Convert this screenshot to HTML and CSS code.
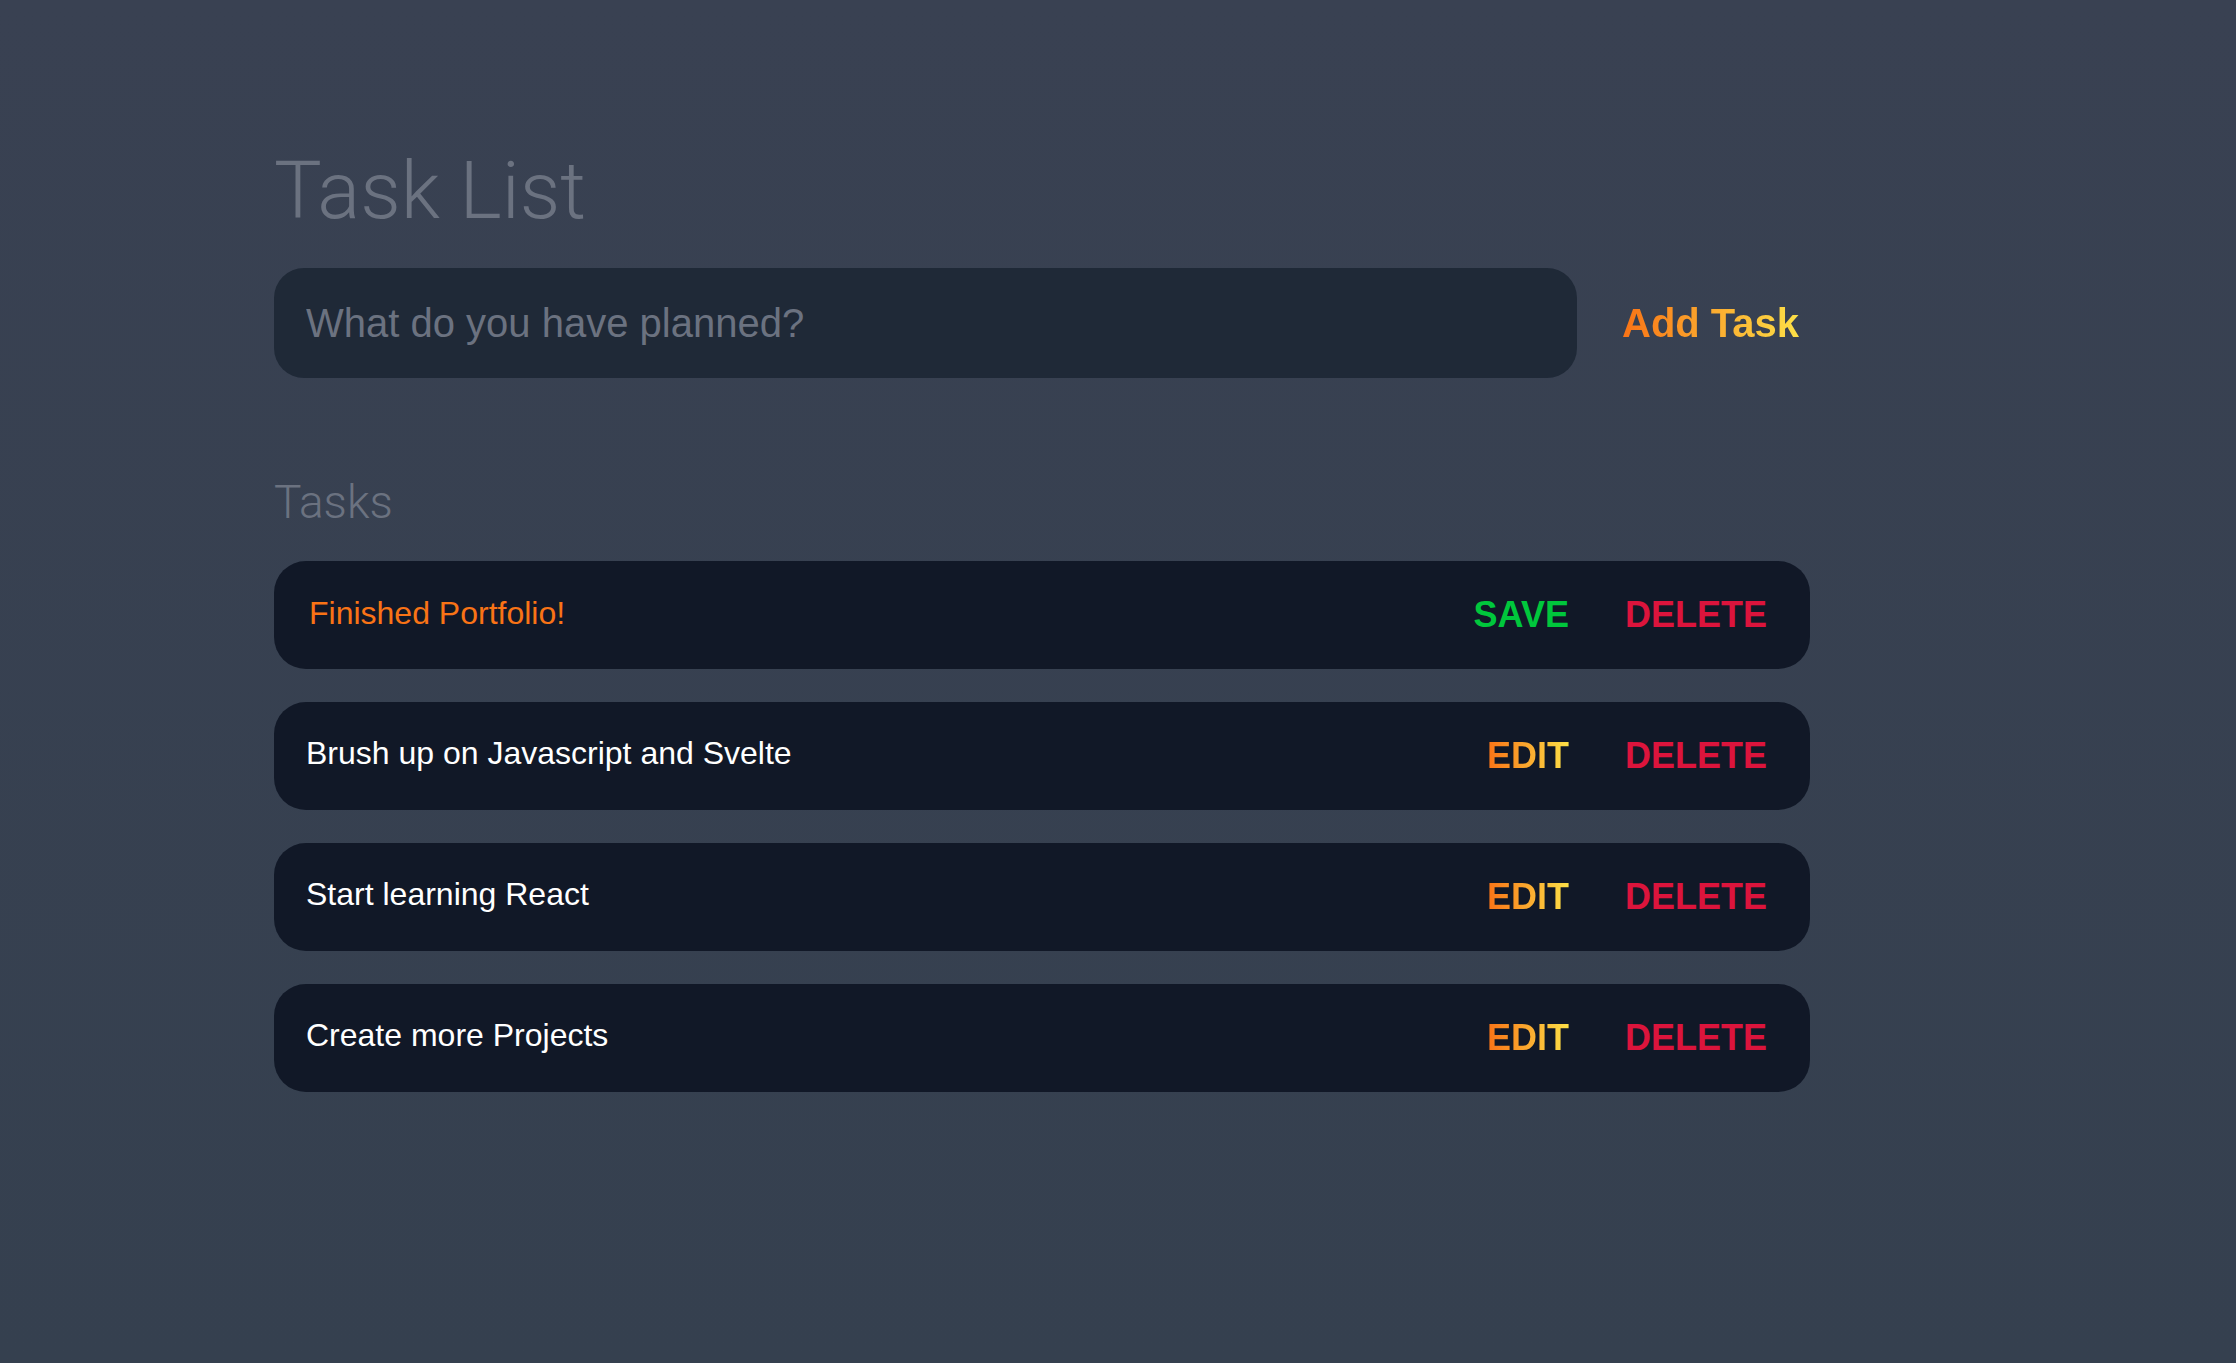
FILE: index.html
```html
<!DOCTYPE html>
<html lang="en">
<head>
<meta charset="utf-8">
<title>Task List</title>
<link rel="stylesheet" href="styles.css">
</head>
<body>
<main class="app">
  <h1 class="title">Task List</h1>
  <form class="new-task">
    <input class="new-task-input" type="text" placeholder="What do you have planned?">
    <button class="add-btn" type="button"><span class="grad-text">Add Task</span></button>
  </form>
  <section class="tasks">
    <h2 class="tasks-heading">Tasks</h2>
    <div class="task-list">
      <div class="task">
        <input class="task-input" type="text" value="Finished Portfolio!">
        <div class="actions">
          <button class="btn save" type="button">SAVE</button>
          <button class="btn delete" type="button">DELETE</button>
        </div>
      </div>
      <div class="task">
        <span class="task-text">Brush up on Javascript and Svelte</span>
        <div class="actions">
          <button class="btn edit" type="button"><span class="grad-text">EDIT</span></button>
          <button class="btn delete" type="button">DELETE</button>
        </div>
      </div>
      <div class="task">
        <span class="task-text">Start learning React</span>
        <div class="actions">
          <button class="btn edit" type="button"><span class="grad-text">EDIT</span></button>
          <button class="btn delete" type="button">DELETE</button>
        </div>
      </div>
      <div class="task">
        <span class="task-text">Create more Projects</span>
        <div class="actions">
          <button class="btn edit" type="button"><span class="grad-text">EDIT</span></button>
          <button class="btn delete" type="button">DELETE</button>
        </div>
      </div>
    </div>
  </section>
</main>
</body>
</html>
```

FILE: styles.css
```css
* {
  box-sizing: border-box;
}

html, body {
  margin: 0;
  padding: 0;
}

body {
  min-height: 100vh;
  background: linear-gradient(to bottom, #394152, #35404f);
  font-family: "Liberation Sans", Arial, sans-serif;
}

.app {
  padding: 151px 0 0 274px;
  width: 1810px;
}

.title {
  margin: 0;
  font-family: Roboto, "Liberation Sans", sans-serif;
  font-weight: 300;
  font-size: 80px;
  line-height: 1;
  color: #6b7280;
}

.new-task {
  display: flex;
  align-items: center;
  margin-top: 37px;
}

.new-task-input {
  width: 1303px;
  height: 110px;
  border: none;
  outline: none;
  border-radius: 30px;
  background: #1f2937;
  padding: 0 0 0 32px;
  font-family: "Liberation Sans", Arial, sans-serif;
  font-size: 40px;
  color: #e5e7eb;
}

.new-task-input::placeholder {
  color: #6b7280;
}

.add-btn {
  margin-left: 45px;
  padding: 0;
  border: none;
  background: none;
  font-family: "Liberation Sans", Arial, sans-serif;
  font-weight: 700;
  font-size: 40px;
  line-height: 1;
  cursor: pointer;
}

.grad-text {
  background: linear-gradient(to right, #f97316, #fde047);
  -webkit-background-clip: text;
  background-clip: text;
  color: transparent;
}

.tasks {
  margin-top: 101px;
}

.tasks-heading {
  margin: 0;
  font-family: Roboto, "Liberation Sans", sans-serif;
  font-weight: 300;
  font-size: 46px;
  line-height: 1;
  color: #6b7280;
}

.task-list {
  display: flex;
  flex-direction: column;
  gap: 33px;
  margin-top: 36px;
}

.task {
  display: flex;
  align-items: center;
  justify-content: space-between;
  height: 108px;
  border-radius: 32px;
  background: #111827;
  padding: 0 43px 0 32px;
}

.task-text {
  font-size: 32px;
  color: #ffffff;
  margin-bottom: 6px;
}

.task-input {
  flex: 1;
  border: none;
  outline: none;
  background: transparent;
  padding: 0 0 0 3px;
  margin-bottom: 3px;
  font-family: "Liberation Sans", Arial, sans-serif;
  font-size: 32px;
  color: #f97316;
}

.actions {
  display: flex;
  align-items: center;
  gap: 56px;
}

.btn {
  padding: 0;
  border: none;
  background: none;
  font-family: "Liberation Sans", Arial, sans-serif;
  font-weight: 700;
  font-size: 36px;
  line-height: 1;
  cursor: pointer;
}

.save {
  color: #00c73c;
}

.delete {
  color: #dc143c;
}
```
